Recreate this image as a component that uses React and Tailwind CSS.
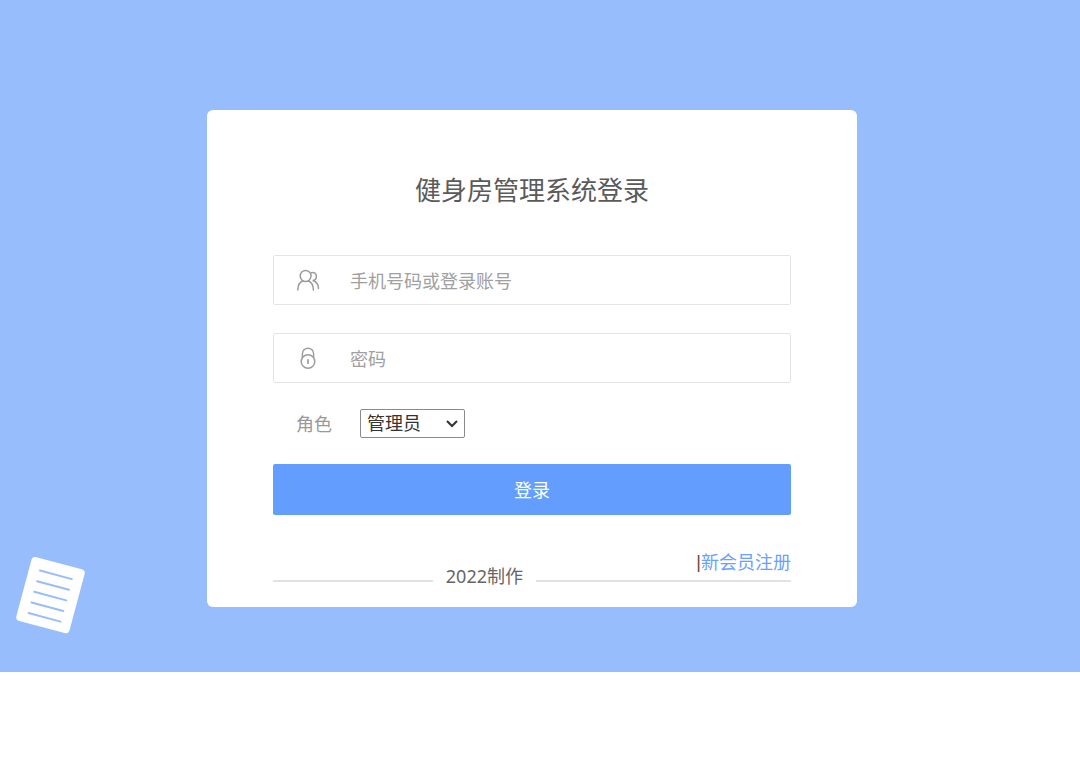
import { useState } from 'react';

function UsersIcon() {
  return (
    <svg className="h-6 w-6" viewBox="0 0 24 24" fill="none" stroke="#9c9c9c" strokeWidth="1.5" strokeLinecap="round">
      <ellipse cx="9.6" cy="8" rx="5.4" ry="5.6" />
      <path d="M1.800 22c.1-4.600 1.900-7.800 5.200-9.200" />
      <path d="M12.200 12.800c3.300 1.400 5.100 4.600 5.200 9.200" />
      <path d="M15.200 4.700c2.900-.8 5.200.8 5.200 3.500 0 2.200-1.500 3.900-3.700 4.300 3.700.9 5.600 3.900 5.800 7.900" />
    </svg>
  );
}

function LockIcon() {
  return (
    <svg className="h-6 w-6" viewBox="0 0 24 24" fill="none" stroke="#9c9c9c" strokeWidth="1.5" strokeLinecap="round">
      <circle cx="12" cy="15.500" r="6.800" />
      <path d="M6.400 11.500V7.800a5.600 5.600 0 0 1 11.200 0v3.700" />
      <path d="M12 13.800v3.400" strokeWidth="1.700" />
    </svg>
  );
}

function PaperIcon() {
  return (
    <svg className="absolute bottom-[37px] left-[10px] h-20 w-20" viewBox="0 0 80 80" aria-hidden="true">
      <g transform="rotate(15 40 40)">
        <rect x="13" y="7" width="55" height="66" rx="4" fill="#fff" />
        <path
          d="M24 19h33M24 30h33M24 41h33M24 52h33M24 63h33"
          stroke="#97bdfd"
          strokeWidth="2"
          strokeLinecap="round"
        />
      </g>
    </svg>
  );
}

function Field({ id, type, placeholder, icon, value, onChange }) {
  return (
    <div className="flex h-[50px] items-center rounded-xs border border-[#e4e4e4] pl-[22px]">
      <label htmlFor={id} className="mr-[30px] shrink-0">
        {icon}
      </label>
      <input
        id={id}
        type={type}
        aria-label={placeholder}
        placeholder={placeholder}
        value={value}
        onChange={(e) => onChange(e.target.value)}
        className="h-full min-w-0 flex-1 bg-transparent pt-0.5 text-lg text-[#555555] outline-none placeholder:text-[#a0a0a0]"
      />
    </div>
  );
}

export default function App() {
  const [account, setAccount] = useState('');
  const [password, setPassword] = useState('');
  const [role, setRole] = useState('管理员');

  const handleSubmit = (e) => {
    e.preventDefault();
  };

  return (
    <div className="min-h-screen bg-white font-['Noto_Sans','Noto_Sans_CJK_SC',sans-serif]">
      <div className="relative bg-[#97bdfd] pt-[110px] pr-4 pb-[65px]">
        <PaperIcon />

        <form
          onSubmit={handleSubmit}
          className="relative mx-auto w-full max-w-[650px] rounded-md bg-white px-[66px] pt-[60px] pb-[17px]"
        >
          <h1 className="mb-[45px] text-center text-[26px] leading-10 text-[#5a5a5a]">健身房管理系统登录</h1>

          <div className="flex flex-col gap-7">
            <Field
              id="account"
              type="text"
              placeholder="手机号码或登录账号"
              icon={<UsersIcon />}
              value={account}
              onChange={setAccount}
            />
            <Field
              id="password"
              type="password"
              placeholder="密码"
              icon={<LockIcon />}
              value={password}
              onChange={setPassword}
            />
          </div>

          <div className="my-[26px] flex items-center pl-[23px] text-lg">
            <label htmlFor="role" className="mr-7 text-[#999999]">
              角色
            </label>
            <div className="relative">
              <select
                id="role"
                value={role}
                onChange={(e) => setRole(e.target.value)}
                className="block h-[29px] w-[105px] appearance-none rounded-xs border border-[#8a8a8a] bg-white pl-1.5 leading-[27px] text-[#333333]"
              >
                <option>管理员</option>
                <option>会员</option>
                <option>教练</option>
              </select>
              <svg
                className="pointer-events-none absolute top-[10px] right-[7px] h-2.5 w-3"
                viewBox="0 0 12 10"
                fill="none"
                stroke="#333333"
                strokeWidth="2"
              >
                <path d="M1 2l5 5 5-5" />
              </svg>
            </div>
          </div>

          <button type="submit" className="block h-[51px] w-full rounded-xs bg-[#639eff] text-lg text-white">
            登录
          </button>

          <div className="mt-[34px] flex items-end text-lg leading-7">
            <div className="mb-2 flex-1 border-b-2 border-[#e2e2e2]" />
            <p className="px-[13px] text-[#666666]">2022制作</p>
            <div className="mb-2 flex w-[255px] justify-end border-b-2 border-[#e2e2e2] pb-[5px] leading-[26px]">
              <span className="font-['Liberation_Sans',sans-serif] text-[#6b4a30]">|</span>
              <a href="#register" className="text-[#6aa1ff]">
                新会员注册
              </a>
            </div>
          </div>
        </form>
      </div>
    </div>
  );
}
